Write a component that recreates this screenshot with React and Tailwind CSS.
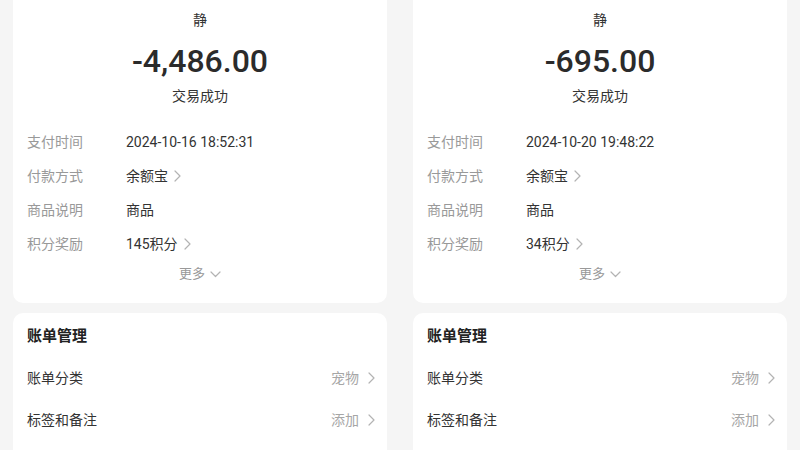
import React from "react";

const FONT = { fontFamily: 'Roboto, "Noto Sans CJK SC", sans-serif' };

function ChevronRight({ className = "" }) {
  return (
    <svg width="7" height="12" viewBox="0 0 7 12" className={className} fill="none">
      <polyline points="1,1 6,6 1,11" stroke="#b3b3b3" strokeWidth="1.2" strokeLinecap="round" strokeLinejoin="round" />
    </svg>
  );
}

function ChevronDown() {
  return (
    <svg width="11" height="7" viewBox="0 0 11 7" fill="none">
      <polyline points="1,1 5.5,5.5 10,1" stroke="#b3b3b3" strokeWidth="1.2" strokeLinecap="round" strokeLinejoin="round" />
    </svg>
  );
}

function Row({ label, value, arrow }) {
  return (
    <div className="flex h-[34px] items-center text-[14px]">
      <div className="w-[99px] text-[#999999]">{label}</div>
      <div className="flex items-center gap-[6px] text-[#333333]">
        <span>{value}</span>
        {arrow && <ChevronRight />}
      </div>
    </div>
  );
}

function Column({ amount, time, points }) {
  return (
    <div className="flex w-[400px] flex-col px-[13px]">
      <div className="flex shrink-0 flex-col rounded-b-[10px] bg-white px-[14px] pb-[19px] pt-[10px]">
        <div className="text-center text-[14px] leading-[20px] text-[#333333]">静</div>
        <div className="mt-[13px] text-center text-[32px] font-medium leading-[36px] text-[#2b2b2b]">{amount}</div>
        <div className="mt-[7px] text-center text-[14px] leading-[20px] text-[#333333]">交易成功</div>
        <div className="mt-[19px] flex flex-col">
          <Row label="支付时间" value={time} />
          <Row label="付款方式" value="余额宝" arrow />
          <Row label="商品说明" value="商品" />
          <Row label="积分奖励" value={points} arrow />
        </div>
        <div className="mt-[3px] flex h-[20px] items-center justify-center gap-[5px] text-[13px] text-[#999999]">
          <span>更多</span>
          <ChevronDown />
        </div>
      </div>
      <div className="mt-[10px] flex h-[220px] shrink-0 flex-col rounded-[10px] bg-white pl-[14px] pr-[12px] pt-[12px]">
        <div className="text-[15px] font-bold leading-[22px] text-[#222222]">账单管理</div>
        <div className="mt-[10px] flex h-[42px] items-center justify-between text-[14px]">
          <span className="text-[#333333]">账单分类</span>
          <div className="flex items-center gap-[9px] text-[#a6a6a6]">
            <span>宠物</span>
            <ChevronRight />
          </div>
        </div>
        <div className="flex h-[42px] items-center justify-between text-[14px]">
          <span className="text-[#333333]">标签和备注</span>
          <div className="flex items-center gap-[9px] text-[#a6a6a6]">
            <span>添加</span>
            <ChevronRight />
          </div>
        </div>
      </div>
    </div>
  );
}

export default function App() {
  return (
    <div className="flex h-[450px] w-[800px] overflow-hidden bg-[#f5f5f5]" style={FONT}>
      <Column amount="-4,486.00" time="2024-10-16 18:52:31" points="145积分" />
      <Column amount="-695.00" time="2024-10-20 19:48:22" points="34积分" />
    </div>
  );
}
